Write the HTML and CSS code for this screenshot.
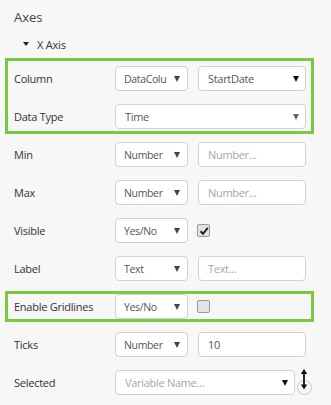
FILE: index.html
```html
<!DOCTYPE html>
<html lang="en">
<head>
    <meta charset="UTF-8">
    <title>Axes</title>
    <link rel="stylesheet" href="styles.css">
</head>
<body>
    <div class="panel">
        <div class="title">Axes</div>
        <div class="subtitle"><span class="caret"></span>X Axis</div>

        <div class="box box-first">
            <div class="row">
                <div class="label">Column</div>
                <div class="select small"><span class="value">DataColu</span><span class="arrow"></span></div>
                <div class="select medium dark"><span class="value">StartDate</span><span class="arrow"></span></div>
            </div>
            <div class="row gap">
                <div class="label">Data Type</div>
                <div class="select wide light"><span class="value">Time</span><span class="arrow"></span></div>
            </div>
        </div>

        <div class="row plain first">
            <div class="label">Min</div>
            <div class="select small"><span class="value">Number</span><span class="arrow"></span></div>
            <div class="input placeholder">Number...</div>
        </div>
        <div class="row plain gap">
            <div class="label">Max</div>
            <div class="select small"><span class="value">Number</span><span class="arrow"></span></div>
            <div class="input placeholder">Number...</div>
        </div>
        <div class="row plain gap">
            <div class="label">Visible</div>
            <div class="select small"><span class="value">Yes/No</span><span class="arrow"></span></div>
            <div class="checkbox">
                <svg width="10" height="10" viewBox="0 0 10 10"><path d="M1.5 5.2 L4 7.8 L8.8 1.8" fill="none" stroke="#222" stroke-width="2"/></svg>
            </div>
        </div>
        <div class="row plain gap">
            <div class="label">Label</div>
            <div class="select small"><span class="value">Text</span><span class="arrow"></span></div>
            <div class="input placeholder">Text...</div>
        </div>

        <div class="box box-second">
            <div class="row">
                <div class="label">Enable Gridlines</div>
                <div class="select small"><span class="value">Yes/No</span><span class="arrow"></span></div>
                <div class="checkbox"></div>
            </div>
        </div>

        <div class="row plain after-box">
            <div class="label">Ticks</div>
            <div class="select small"><span class="value">Number</span><span class="arrow"></span></div>
            <div class="input">10</div>
        </div>
        <div class="row plain gap">
            <div class="label">Selected</div>
            <div class="select wide placeholder"><span class="value">Variable Name...</span><span class="arrow black"></span></div>
            <svg class="sort" width="18" height="30" viewBox="0 0 18 30">
                <circle cx="8.5" cy="19.5" r="7" fill="none" stroke="#d4d4d4" stroke-width="1.2"/>
                <path d="M8 3 L8 19" stroke="#111" stroke-width="1.8"/>
                <path d="M4.8 6 L8 1 L11.2 6 Z" fill="#111"/>
                <path d="M4.8 16.5 L8 21.5 L11.2 16.5 Z" fill="#111"/>
            </svg>
        </div>
    </div>
</body>
</html>
```

FILE: styles.css
```css
body {
    margin: 0;
    background-color: #f7f7f7;
    font-family: "Open Sans", "Noto Sans", sans-serif;
    color: #333;
}
.panel {
    margin-left: 5px;
    width: 309px;
}
.title {
    padding: 7px 0 0 9px;
    font-size: 13px;
    line-height: 20px;
    color: #444;
}
.subtitle {
    display: flex;
    align-items: center;
    margin-top: 8px;
    padding-left: 18px;
    height: 18px;
    font-size: 11px;
    letter-spacing: -0.2px;
    color: #333;
}
.caret {
    width: 0;
    height: 0;
    border-left: 3px solid transparent;
    border-right: 3px solid transparent;
    border-top: 4px solid #222;
    margin-right: 8px;
}
.box {
    border: 3px solid #7bc93e;
    padding: 0 0 0 6px;
}
.box-first {
    margin-top: 5px;
    padding-top: 5px;
    padding-bottom: 2px;
}
.box-second {
    margin-top: 10px;
}
.row {
    display: flex;
    align-items: center;
    height: 25px;
}
.row.plain {
    padding-left: 9px;
}
.row.gap {
    margin-top: 13px;
}
.row.first {
    margin-top: 8px;
}
.row.after-box {
    margin-top: 10px;
}
.label {
    width: 101px;
    flex-shrink: 0;
    font-size: 11px;
    letter-spacing: -0.25px;
    color: #333;
}
.select, .input {
    display: flex;
    align-items: center;
    box-sizing: border-box;
    height: 25px;
    background-color: #fff;
    border: 1px solid #d2d2d2;
    border-radius: 4px;
    padding: 0 6px 0 9px;
    font-size: 11px;
    letter-spacing: -0.3px;
    color: #555;
    white-space: nowrap;
}
.value {
    flex: 1;
    min-width: 0;
}
.select.small {
    width: 73px;
    padding-right: 7px;
    padding-left: 8px;
    font-size: 10.5px;
    letter-spacing: -0.35px;
}
.select.small .value {
    margin-right: 2px;
}
.select.medium {
    width: 108px;
    margin-left: 10px;
}
.select.wide {
    width: 191px;
}
.input {
    width: 108px;
    margin-left: 10px;
}
.placeholder {
    color: #a6a6a6;
}
.arrow {
    flex-shrink: 0;
    width: 0;
    height: 0;
    border-left: 3.5px solid transparent;
    border-right: 3.5px solid transparent;
    border-top: 6px solid #444;
}
.dark .arrow, .arrow.black {
    border-top-color: #111;
}
.light .arrow {
    border-top-color: #666;
}
.checkbox {
    display: flex;
    align-items: center;
    justify-content: center;
    box-sizing: border-box;
    width: 13px;
    height: 13px;
    margin-left: 9px;
    background-color: #e4e4e4;
    border: 1px solid #9a9a9a;
    border-radius: 2px;
}
.sort {
    margin-left: 1px;
    flex-shrink: 0;
}
```
